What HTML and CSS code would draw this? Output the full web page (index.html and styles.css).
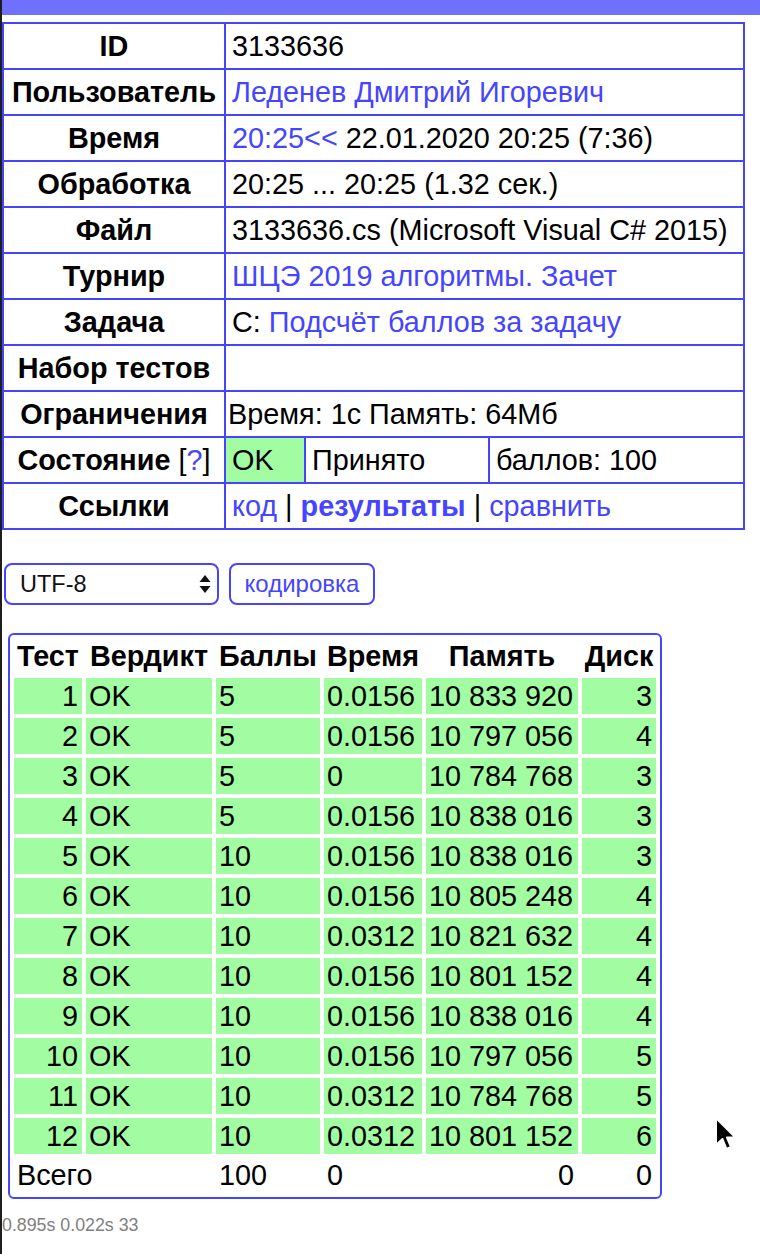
FILE: index.html
```html
<!DOCTYPE html>
<html lang="ru">
<head>
<meta charset="utf-8">
<title>Посылка 3133636</title>
<link rel="stylesheet" href="styles.css">
</head>
<body>
<div class="topbar"></div>
<table class="info">
  <colgroup><col class="c1"><col class="c2"><col class="c3"><col class="c4"></colgroup>
  <tr><th>ID</th><td colspan="3">3133636</td></tr>
  <tr><th>Пользователь</th><td colspan="3"><a href="#">Леденев Дмитрий Игоревич</a></td></tr>
  <tr><th>Время</th><td colspan="3"><a href="#">20:25&lt;&lt;</a> 22.01.2020 20:25 (7:36)</td></tr>
  <tr><th>Обработка</th><td colspan="3">20:25 ... 20:25 (1.32 сек.)</td></tr>
  <tr><th>Файл</th><td colspan="3">3133636.cs (Microsoft Visual C# 2015)</td></tr>
  <tr><th>Турнир</th><td colspan="3"><a href="#">ШЦЭ 2019 алгоритмы. Зачет</a></td></tr>
  <tr><th>Задача</th><td colspan="3">C: <a href="#">Подсчёт баллов за задачу</a></td></tr>
  <tr><th>Набор тестов</th><td colspan="3"></td></tr>
  <tr><th>Ограничения</th><td colspan="3" class="limits">Время: 1с Память: 64Мб</td></tr>
  <tr><th>Состояние <span class="normal">[<a href="#">?</a>]</span></th><td class="ok">OK</td><td>Принято</td><td>баллов: 100</td></tr>
  <tr><th>Ссылки</th><td colspan="3"><a href="#">код</a> | <a href="#"><b>результаты</b></a> | <a href="#">сравнить</a></td></tr>
</table>

<div class="controls">
  <div class="select-wrap">
    <select class="enc"><option>UTF-8</option><option>CP1251</option></select>
    <svg class="arrows" width="12" height="19" viewBox="0 0 12 19"><path d="M6 0 L11.5 7 L0.5 7 Z" fill="#111"/><path d="M0.5 11 L11.5 11 L6 18 Z" fill="#111"/></svg>
  </div>
  <button class="encbtn">кодировка</button>
</div>

<table class="results">
  <tr><th class="w1">Тест</th><th class="w2">Вердикт</th><th class="w3">Баллы</th><th class="w4">Время</th><th class="w5">Память</th><th class="w6">Диск</th></tr>
  <tr><td class="r">1</td><td>OK</td><td>5</td><td>0.0156</td><td>10 833 920</td><td class="r">3</td></tr>
  <tr><td class="r">2</td><td>OK</td><td>5</td><td>0.0156</td><td>10 797 056</td><td class="r">4</td></tr>
  <tr><td class="r">3</td><td>OK</td><td>5</td><td>0</td><td>10 784 768</td><td class="r">3</td></tr>
  <tr><td class="r">4</td><td>OK</td><td>5</td><td>0.0156</td><td>10 838 016</td><td class="r">3</td></tr>
  <tr><td class="r">5</td><td>OK</td><td>10</td><td>0.0156</td><td>10 838 016</td><td class="r">3</td></tr>
  <tr><td class="r">6</td><td>OK</td><td>10</td><td>0.0156</td><td>10 805 248</td><td class="r">4</td></tr>
  <tr><td class="r">7</td><td>OK</td><td>10</td><td>0.0312</td><td>10 821 632</td><td class="r">4</td></tr>
  <tr><td class="r">8</td><td>OK</td><td>10</td><td>0.0156</td><td>10 801 152</td><td class="r">4</td></tr>
  <tr><td class="r">9</td><td>OK</td><td>10</td><td>0.0156</td><td>10 838 016</td><td class="r">4</td></tr>
  <tr><td class="r">10</td><td>OK</td><td>10</td><td>0.0156</td><td>10 797 056</td><td class="r">5</td></tr>
  <tr><td class="r">11</td><td>OK</td><td>10</td><td>0.0312</td><td>10 784 768</td><td class="r">5</td></tr>
  <tr><td class="r">12</td><td>OK</td><td>10</td><td>0.0312</td><td>10 801 152</td><td class="r">6</td></tr>
  <tr class="total"><td colspan="2">Всего</td><td>100</td><td>0</td><td class="r">0</td><td class="r">0</td></tr>
</table>

<div class="footer">0.895s 0.022s 33</div>

<svg class="cursor" width="26" height="38" viewBox="0 0 26 38">
  <path d="M3 2 L3 29 L9.5 23 L13.5 33 L18 31 L14 21.5 L22.5 21.5 Z" fill="#000" stroke="#fff" stroke-width="2" stroke-linejoin="round"/>
</svg>
</body>
</html>
```

FILE: styles.css
```css
* {
  box-sizing: border-box;
}

html,
body {
  margin: 0;
  background: #ffffff;
}

body {
  position: relative;
  min-height: 1254px;
  border-left: 2px solid #1e1e1e;
  font-family: "Liberation Sans", Arial, Helvetica, sans-serif;
  color: #000;
}

a {
  color: #4545ff;
  text-decoration: none;
}

.topbar {
  height: 15px;
  background: #7070ff;
}

/* info table */
.info {
  margin-top: 7px;
  width: 743px;
  table-layout: fixed;
  border-collapse: separate;
  border-spacing: 0;
  border-top: 2px solid #4545ff;
  border-left: 2px solid #4545ff;
  font-size: 28.8px;
}

.info .c1 { width: 222px; }
.info .c2 { width: 80px; }
.info .c3 { width: 184px; }
.info .c4 { width: 255px; }

.info th,
.info td {
  height: 46px;
  padding: 0 6px;
  border-right: 2px solid #4545ff;
  border-bottom: 2px solid #4545ff;
  white-space: nowrap;
  vertical-align: middle;
  line-height: 33px;
  overflow: visible;
}

.info th {
  padding: 0;
  text-align: center;
  font-weight: bold;
}

.info th .normal {
  font-weight: normal;
}

.info td.limits {
  padding-left: 2px;
}

.info td.ok {
  background: #a2fda2;
}

/* encoding controls */
.controls {
  display: flex;
  gap: 10px;
  margin: 33px 0 0 2px;
}

.select-wrap {
  position: relative;
  width: 215px;
  height: 42px;
}

.enc {
  appearance: none;
  -webkit-appearance: none;
  width: 100%;
  height: 100%;
  padding: 0 0 0 14px;
  border: 2px solid #4545ff;
  border-radius: 8px;
  background: #fff;
  color: #111;
  font-family: "Liberation Sans", Arial, sans-serif;
  font-size: 23.5px;
}

.arrows {
  position: absolute;
  right: 8px;
  top: 12px;
}

.encbtn {
  width: 146px;
  height: 42px;
  border: 2px solid #4545ff;
  border-radius: 8px;
  background: #fff;
  color: #4545ff;
  font-family: "Liberation Sans", Arial, sans-serif;
  font-size: 24px;
  padding: 0;
}

/* results table */
.results {
  margin: 28px 0 0 6px;
  width: 654px;
  table-layout: fixed;
  border-collapse: separate;
  border-spacing: 4px;
  border: 2px solid #4545ff;
  border-radius: 6px;
  font-size: 28.8px;
}

.results .w1 { width: 68px; }
.results .w2 { width: 126px; }
.results .w3 { width: 104px; }
.results .w4 { width: 98px; }
.results .w5 { width: 152px; }
.results .w6 { width: 74px; }

.results th {
  height: 35px;
  padding: 0;
  text-align: center;
  font-weight: bold;
  line-height: 35px;
  white-space: nowrap;
}

.results td {
  height: 36px;
  padding: 0 3px;
  line-height: 36px;
  background: #a2fda2;
  white-space: nowrap;
}

.results td.r {
  text-align: right;
  padding-right: 4px;
}

.results .total td {
  height: 35px;
  line-height: 35px;
  background: none;
}

.footer {
  margin-top: 16px;
  font-size: 17.8px;
  line-height: 21px;
  color: #808080;
}

.cursor {
  position: absolute;
  left: 711px;
  top: 1116px;
}
```
